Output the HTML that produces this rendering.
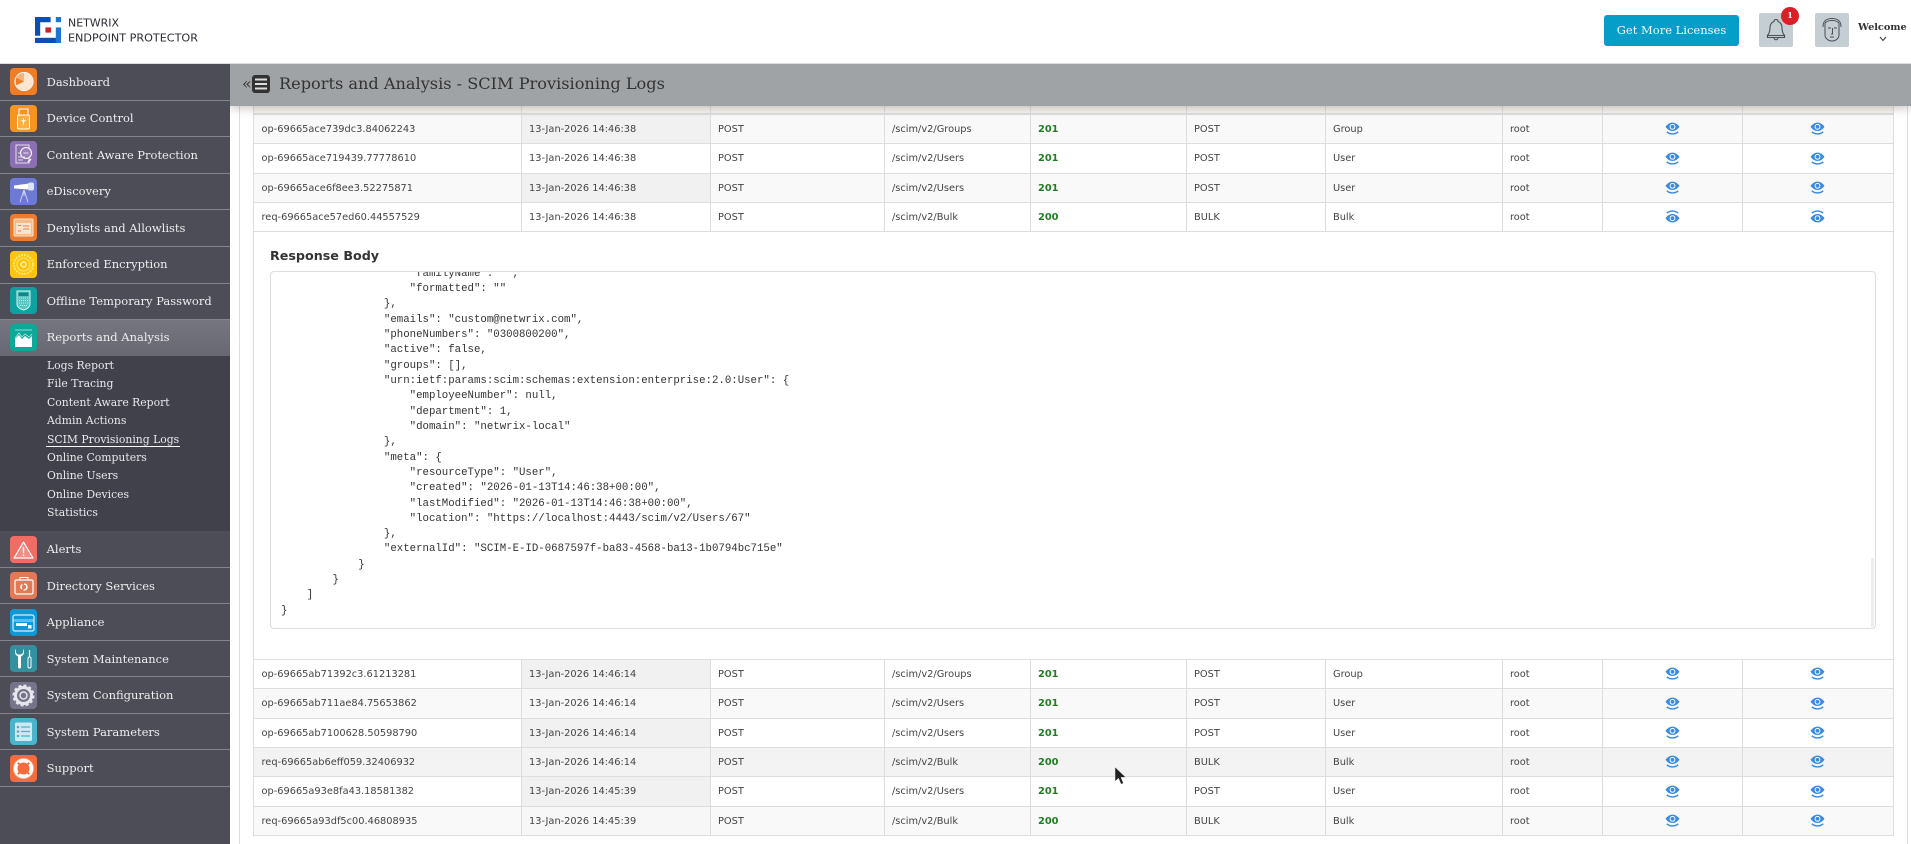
<!DOCTYPE html>
<html>
<head>
<meta charset="utf-8">
<title>Reports and Analysis - SCIM Provisioning Logs</title>
<style>
html,body{margin:0;padding:0;background:#fff;width:1911px;height:844px;overflow:hidden}
body{position:relative;font-family:"DejaVu Sans","Liberation Sans",sans-serif;color:#333}
.abs{position:absolute}
#top{position:absolute;left:0;top:0;width:1911px;height:63px;background:#fff;border-bottom:1px solid #ddd;z-index:5}
#side{position:absolute;left:0;top:64px;width:230px;height:780px;background:#4c4d57;z-index:4}
.i{position:absolute;left:0;width:230px;border-bottom:1px solid #85868d;box-sizing:border-box}
.t{position:absolute;left:46.6px;top:0;font-family:"DejaVu Serif","Liberation Serif",serif;font-size:11.5px;color:#eceef0;white-space:nowrap}
.ic{position:absolute;left:10px;width:27px;height:27px;z-index:6}
.s{position:absolute;left:47px;font-family:"DejaVu Serif","Liberation Serif",serif;font-size:10.8px;line-height:18px;color:#e8e9ec;white-space:nowrap;z-index:6}
#title{position:absolute;left:230px;top:64px;width:1681px;height:42px;background:#a0a3a6;box-shadow:0 2px 9px rgba(60,40,20,.28);z-index:3}
#title span{position:absolute;white-space:nowrap;font-family:"DejaVu Serif","Liberation Serif",serif;color:#333}
.vl{position:absolute;top:100px;bottom:0;width:1px;background:#ddd}
table{position:absolute;left:253px;width:1641px;border-collapse:separate;border-spacing:0;table-layout:fixed;font-size:9.8px;color:#444;background:#fff}
td{box-sizing:border-box;padding:0 0 0 7px;border-right:1px solid #ddd;border-bottom:1px solid #ddd;white-space:nowrap;overflow:hidden;vertical-align:middle}
td:first-child{border-left:1px solid #ddd;padding-left:7.5px}
tr.h td{border-bottom:2px solid #ddd;background:#f7f5f2;padding:0}
tr.a td{background:#f9f9f9}
tr.a td.k{background:#f1f1f1}
tr.b td.k{background:#f1f1f1}
tr.c td.k{background:#f7f7f7}
tr.c td{background:#f9f9f9}
tr.d td,tr.d td.k{background:#f3f3f3}
td b{color:#1f7f1f;font-weight:700;font-size:9.8px}
td.e{padding:0 1px 0 0;text-align:center}
td.e svg{display:block;margin:-1px auto 0;width:15px;height:13px}
#rb{position:absolute;left:253px;top:232px;width:1641px;height:427px;box-sizing:border-box;border-left:1px solid #ddd;border-right:1px solid #ddd;background:#fff}
#rbt{position:absolute;left:270px;top:247px;font-size:12.7px;line-height:17px;font-weight:700;color:#333;white-space:nowrap}
#pb{position:absolute;left:270px;top:271px;width:1606px;height:358px;box-sizing:border-box;border:1px solid #ddd;border-radius:4px;overflow:hidden;background:#fff}
#pb pre{position:absolute;left:10px;top:-5.2px;margin:0;font-family:"Liberation Mono",monospace;font-size:10.72px;line-height:15.31px;color:#333}
#sb{position:absolute;left:1871px;top:558px;width:3px;height:69px;background:#eee}
</style>
</head>
<body>
<svg width="0" height="0" style="position:absolute">
<symbol id="eb" viewBox="0 0 15 13"><path d="M.5 4.8C2.6 1.9 5 .6 7.5.6s4.9 1.3 7 4.2c-2.1 2.9-4.5 4.2-7 4.2S2.6 7.700.5 4.800z" fill="#3a8be0"/><circle cx="7.500" cy="4.800" r="2.900" fill="#fff"/><circle cx="7.500" cy="4.800" r="1.900" fill="#3a8be0"/><path d="M1.800 9.800C5 12.600 10 12.600 13.200 9.800" fill="none" stroke="#3a8be0" stroke-width="1.400"/></symbol>
<symbol id="et" viewBox="0 0 15 13"><path d="M.5 8.200C2.600 5.300 5 4 7.500 4s4.900 1.300 7 4.200c-2.100 2.900-4.500 4.200-7 4.200S2.600 11.100.5 8.200z" fill="#3a8be0"/><circle cx="7.500" cy="8.200" r="2.900" fill="#fff"/><circle cx="7.500" cy="8.200" r="1.900" fill="#3a8be0"/><path d="M1.800 3.200C5 .4 10 .4 13.200 3.200" fill="none" stroke="#3a8be0" stroke-width="1.400"/></symbol>
</svg>

<div id="top">
  <svg class="abs" style="left:35px;top:17px" width="26" height="26" viewBox="0 0 25 25">
    <path d="M0 0H15V5H5V18H0Z" fill="#0b4fb3"/>
    <rect x="20" y="0" width="5" height="5" fill="#1f75d0"/>
    <rect x="0" y="20" width="25" height="5" fill="#0b4fb3"/>
    <rect x="20" y="10" width="5" height="15" fill="#1f75d0"/>
    <rect x="10" y="10" width="5.500" height="5" fill="#d2232a"/>
  </svg>
  <svg class="abs" style="left:66px;top:14px" width="140" height="32">
    <text x="2" y="12.500" font-family="DejaVu Sans, sans-serif" font-size="10.500" fill="#2b2b33" textLength="51" lengthAdjust="spacingAndGlyphs">NETWRIX</text>
    <text x="2" y="27.500" font-family="DejaVu Sans, sans-serif" font-size="10.500" fill="#2b2b33" textLength="130" lengthAdjust="spacingAndGlyphs">ENDPOINT PROTECTOR</text>
  </svg>
  <div class="abs" style="left:1604px;top:15px;width:135px;height:31px;background:#059ec8;border-radius:3px;color:#f2fbff;font-family:'DejaVu Serif',serif;font-size:11.5px;line-height:31px;text-align:center">Get More Licenses</div>
  <div class="abs" style="left:1759px;top:13px;width:34px;height:34px;background:#c5ced3;border-radius:2px"></div>
  <svg class="abs" style="left:1765px;top:18px" width="22" height="24" viewBox="0 0 22 24" fill="none" stroke="#4a4f55" stroke-width="1.100">
    <path d="M11 1.500c-1.200 0-2 .8-2 2-3 1-4 3.500-4 6.500 0 4-1.300 6-2.500 7.500h17c-1.200-1.500-2.500-3.500-2.500-7.500 0-3-1-5.500-4-6.500 0-1.200-.8-2-2-2z"/><path d="M2.500 17.500v2h17v-2"/><path d="M9 19.500c0 3 4 3 4 0"/>
  </svg>
  <div class="abs" style="left:1781px;top:7px;width:18px;height:18px;border-radius:50%;background:#dc1f26;color:#fff;font-family:'DejaVu Serif',serif;font-weight:700;font-size:8px;line-height:17px;text-align:center">1</div>
  <div class="abs" style="left:1815px;top:13px;width:34px;height:34px;background:#c5ced3;border-radius:2px"></div>
  <svg class="abs" style="left:1820px;top:17px" width="24" height="26" viewBox="0 0 24 26" fill="none" stroke="#4a4f55" stroke-width="1">
    <path d="M3 10C3 3 7 1.500 12 1.500S21 3 21 10"/><path d="M5 10V6.500C6 4 9 3.500 12 3.500S18 4 19 6.500V10"/><path d="M5 8v10c0 3 3 6 7 6s7-3 7-6V8"/><path d="M8 11h3M14 11h3M12.500 11v6h-1.500M10 20h4"/>
  </svg>
  <div class="abs" style="left:1858px;top:20px;font-family:'DejaVu Serif',serif;font-weight:700;font-size:9.700px;line-height:15px;color:#333;white-space:nowrap">Welcome</div>
  <svg class="abs" style="left:1879px;top:36px" width="8" height="6"><path d="M1 1l3 3.500L7 1" fill="none" stroke="#333" stroke-width="1"/></svg>
</div>

<div id="side">
  <div class="i" style="top:0;height:37px"><span class="t" style="line-height:36px">Dashboard</span></div>
  <div class="i" style="top:37px;height:36px"><span class="t" style="line-height:35px">Device Control</span></div>
  <div class="i" style="top:73px;height:37px"><span class="t" style="line-height:36px">Content Aware Protection</span></div>
  <div class="i" style="top:110px;height:36px"><span class="t" style="line-height:35px">eDiscovery</span></div>
  <div class="i" style="top:146px;height:37px"><span class="t" style="line-height:36px">Denylists and Allowlists</span></div>
  <div class="i" style="top:183px;height:37px"><span class="t" style="line-height:35px">Enforced Encryption</span></div>
  <div class="i" style="top:220px;height:36px"><span class="t" style="line-height:35px">Offline Temporary Password</span></div>
  <div class="i" style="top:256px;height:36px;background:linear-gradient(#75767f,#676872);border:0"><span class="t" style="line-height:34px">Reports and Analysis</span></div>
  <div class="abs" style="left:0;top:292px;width:230px;height:175px;background:#40414b"></div>
  <div class="i" style="top:467px;height:37px"><span class="t" style="line-height:36px">Alerts</span></div>
  <div class="i" style="top:504px;height:36px"><span class="t" style="line-height:37px">Directory Services</span></div>
  <div class="i" style="top:540px;height:37px"><span class="t" style="line-height:36px">Appliance</span></div>
  <div class="i" style="top:577px;height:36px"><span class="t" style="line-height:37px">System Maintenance</span></div>
  <div class="i" style="top:613px;height:37px"><span class="t" style="line-height:36px">System Configuration</span></div>
  <div class="i" style="top:650px;height:36px"><span class="t" style="line-height:37px">System Parameters</span></div>
  <div class="i" style="top:686px;height:37px"><span class="t" style="line-height:36px">Support</span></div>
</div>

<div class="s" style="top:357px">Logs Report</div>
<div class="s" style="top:375px">File Tracing</div>
<div class="s" style="top:394px">Content Aware Report</div>
<div class="s" style="top:412px">Admin Actions</div>
<div class="s" style="top:431px">SCIM Provisioning Logs</div>
<div class="abs" style="left:46px;top:446px;width:134px;height:1px;background:#fff;z-index:6"></div>
<div class="s" style="top:449px">Online Computers</div>
<div class="s" style="top:467px">Online Users</div>
<div class="s" style="top:486px">Online Devices</div>
<div class="s" style="top:504px">Statistics</div>

<!-- sidebar icons -->
<svg class="ic" style="top:68px" viewBox="0 0 27 27"><rect width="27" height="27" rx="4" fill="#ee7d27"/><circle cx="14" cy="13.500" r="9" fill="none" stroke="#fff" stroke-width="1.200"/><path d="M14 13.500V4.500a9 9 0 0 1 0 18 9 9 0 0 1-8-5z" fill="#fde6d0"/><path d="M5 9l9 4.500V4.500z" fill="#f9b27a"/></svg>
<svg class="ic" style="top:105px" viewBox="0 0 27 27"><rect width="27" height="27" rx="4" fill="#f7941d"/><rect x="9" y="4" width="9" height="6" fill="none" stroke="#fff"/><rect x="7.500" y="10" width="12" height="14" rx="1.500" fill="#fbb040" stroke="#fff"/><path d="M13.500 13v7M11.500 15l2 2 2-2" stroke="#fff" fill="none"/></svg>
<svg class="ic" style="top:141px" viewBox="0 0 27 27"><rect width="27" height="27" rx="4" fill="#8b6fb0"/><rect x="6" y="4" width="13" height="18" fill="none" stroke="#e6def0"/><circle cx="16" cy="12" r="5.500" fill="#9a80bc" stroke="#fff"/><path d="M13.500 12h5M8 12h3M8 16h7M8 19h5" stroke="#e6def0"/><path d="M18 21l3-3" stroke="#fff" stroke-width="1.500"/></svg>
<svg class="ic" style="top:178px" viewBox="0 0 27 27"><rect width="27" height="27" rx="4" fill="#6e79d6"/><path d="M4 7.500l15-2v6l-15-1z" fill="#fff"/><rect x="18" y="4.500" width="6" height="8" rx="2" fill="#dfe3fa"/><path d="M14 12l-4 12M14 12l4 12M14 12v6" stroke="#dfe3fa" fill="none" stroke-width=".800"/></svg>
<svg class="ic" style="top:214px" viewBox="0 0 27 27"><rect width="27" height="27" rx="4" fill="#ef7c2e"/><rect x="4" y="5" width="19" height="17" rx="1" fill="#f7bb8a" stroke="#fde3cf"/><rect x="6" y="9" width="15" height="11" fill="#fbe4cf"/><path d="M8 11.500h3M13 12h6M13 15h6M8 17h3" stroke="#e8813b"/></svg>
<svg class="ic" style="top:251px" viewBox="0 0 27 27"><rect width="27" height="27" rx="4" fill="#fcc40f"/><circle cx="13.500" cy="13.500" r="9.500" fill="none" stroke="#fde77f" stroke-width="2" stroke-dasharray="2 1"/><circle cx="13.500" cy="13.500" r="6.500" fill="none" stroke="#fde77f"/><circle cx="13.500" cy="13.500" r="2.500" fill="none" stroke="#fff3a8" stroke-width="1.500"/></svg>
<svg class="ic" style="top:287px" viewBox="0 0 27 27"><rect width="27" height="27" rx="4" fill="#10a0a0"/><path d="M7 4h13v13c0 3-3 5-6.500 6C10 22 7 20 7 17z" fill="#5cc2bf" stroke="#d5f2f0"/><rect x="8.500" y="5.500" width="10" height="3.500" fill="#0c8888"/><path d="M9 11h9M9 13.500h9M9 16h9M10 18.500h7" stroke="#c8ecea" stroke-dasharray="1 1"/></svg>
<svg class="ic" style="top:324px" viewBox="0 0 27 27"><rect width="27" height="27" rx="4" fill="#0da898"/><path d="M5 6h17" stroke="#8fdcd3"/><path d="M5 23V15l4-4 3 4 3-3 4 3 3-3v11z" fill="#fff"/><path d="M5 14l4-5 3 4 3-3 4 3 3-3" fill="none" stroke="#bdeee8" stroke-width=".700"/></svg>
<svg class="ic" style="top:536px" viewBox="0 0 27 27"><rect width="27" height="27" rx="4" fill="#ef6d64"/><path d="M13.500 6L4 22h19z" fill="#f48c85" stroke="#fff" stroke-width="1.200" stroke-linejoin="round"/><path d="M13.500 11v6M13.500 18.500v1.500" stroke="#fff" stroke-width="1.400"/></svg>
<svg class="ic" style="top:572px" viewBox="0 0 27 27"><rect width="27" height="27" rx="4" fill="#e37a57"/><rect x="5" y="8" width="18" height="14" rx="1.500" fill="none" stroke="#fff" stroke-width="1.200"/><path d="M10 8V5.500h8V8" fill="none" stroke="#fff"/><circle cx="14" cy="15" r="3" fill="none" stroke="#fff" stroke-width="1.500" stroke-dasharray="5 2"/></svg>
<svg class="ic" style="top:609px" viewBox="0 0 27 27"><rect width="27" height="27" rx="4" fill="#0d99d9"/><rect x="3" y="6" width="21" height="16" rx="2" fill="none" stroke="#d6f0fb" stroke-width="1.200"/><rect x="3" y="10" width="21" height="3" fill="#d6f0fb" opacity=".4"/><rect x="6" y="14" width="11" height="3" fill="#fff"/><rect x="18" y="16" width="3.500" height="3.500" fill="#fff"/></svg>
<svg class="ic" style="top:645px" viewBox="0 0 27 27"><rect width="27" height="27" rx="4" fill="#33909f"/><path d="M6 4c-2 3-1 6 2 7.500V22c0 2 3 2 3 0V11.500c3-1.500 4-4.500 2-7.500v4l-2 1.500h-3L6 8z" fill="#fff"/><path d="M19.500 5v7" stroke="#fff" stroke-width="1.200"/><rect x="18" y="12" width="3" height="11" rx="1.400" fill="none" stroke="#fff"/></svg>
<svg class="ic" style="top:682px" viewBox="0 0 27 27"><rect width="27" height="27" rx="4" fill="#74748a"/><circle cx="13.500" cy="13.500" r="8" fill="none" stroke="#e6e6ec" stroke-width="3"/><circle cx="13.500" cy="13.500" r="10" fill="none" stroke="#e6e6ec" stroke-width="2" stroke-dasharray="3 2.200"/><circle cx="13.500" cy="13.500" r="3.500" fill="none" stroke="#e6e6ec" stroke-width="1.500"/></svg>
<svg class="ic" style="top:718px" viewBox="0 0 27 27"><rect width="27" height="27" rx="4" fill="#4bb3cc"/><rect x="5" y="4.500" width="17" height="18.500" rx="1.500" fill="#cdeaf2"/><path d="M11 9h9M11 13.500h9M11 18h9" stroke="#4bb3cc" stroke-width="1.300"/><circle cx="8" cy="9" r="1.300" fill="#4bb3cc"/><circle cx="8" cy="13.500" r="1.300" fill="#4bb3cc"/><circle cx="8" cy="18" r="1.300" fill="#4bb3cc"/></svg>
<svg class="ic" style="top:755px" viewBox="0 0 27 27"><rect width="27" height="27" rx="4" fill="#f36c3d"/><circle cx="13.500" cy="13.500" r="8" fill="none" stroke="#fff" stroke-width="4"/><circle cx="13.500" cy="13.500" r="10" fill="none" stroke="#f9c4ae" stroke-width=".800"/><path d="M7.800 7.800l3 3M19.200 7.800l-3 3M7.800 19.200l3-3M19.200 19.200l-3-3" stroke="#f36c3d" stroke-width="2"/></svg>

<div id="title">
  <span style="left:12px;top:10px;font-size:16px;line-height:20px">«</span>
  <svg class="abs" style="left:22px;top:11px" width="18" height="18"><rect width="18" height="18" rx="3" fill="#333"/><path d="M3 4.500h12M3 9h12M3 13.500h12" stroke="#ddd" stroke-width="2"/></svg>
  <span style="left:49px;top:8px;font-size:16.150px;line-height:24px">Reports and Analysis - SCIM Provisioning Logs</span>
</div>

<div class="vl" style="left:239px"></div>
<div class="vl" style="left:1907px"></div>

<table style="top:100px">
<colgroup><col style="width:269px"><col style="width:189px"><col style="width:174px"><col style="width:146px"><col style="width:156px"><col style="width:139px"><col style="width:177px"><col style="width:100px"><col style="width:140px"><col style="width:151px"></colgroup>
<tr class="h" style="height:15px"><td></td><td></td><td></td><td></td><td></td><td></td><td></td><td></td><td></td><td></td></tr>
<tr class="a" style="height:29px"><td>op-69665ace739dc3.84062243</td><td class="k">13-Jan-2026 14:46:38</td><td>POST</td><td>/scim/v2/Groups</td><td><b>201</b></td><td>POST</td><td>Group</td><td>root</td><td class="e"><svg><use href="#eb"/></svg></td><td class="e"><svg><use href="#eb"/></svg></td></tr>
<tr class="w" style="height:30px"><td>op-69665ace719439.77778610</td><td>13-Jan-2026 14:46:38</td><td>POST</td><td>/scim/v2/Users</td><td><b>201</b></td><td>POST</td><td>User</td><td>root</td><td class="e"><svg><use href="#eb"/></svg></td><td class="e"><svg><use href="#eb"/></svg></td></tr>
<tr class="a" style="height:29px"><td>op-69665ace6f8ee3.52275871</td><td class="k">13-Jan-2026 14:46:38</td><td>POST</td><td>/scim/v2/Users</td><td><b>201</b></td><td>POST</td><td>User</td><td>root</td><td class="e"><svg><use href="#eb"/></svg></td><td class="e"><svg><use href="#eb"/></svg></td></tr>
<tr class="w" style="height:29px"><td>req-69665ace57ed60.44557529</td><td>13-Jan-2026 14:46:38</td><td>POST</td><td>/scim/v2/Bulk</td><td><b>200</b></td><td>BULK</td><td>Bulk</td><td>root</td><td class="e"><svg><use href="#et"/></svg></td><td class="e"><svg><use href="#et"/></svg></td></tr>
</table>

<div id="rb"></div>
<div id="rbt">Response Body</div>
<div id="pb"><pre>                    "familyName": "",
                    "formatted": ""
                },
                "emails": "custom@netwrix.com",
                "phoneNumbers": "0300800200",
                "active": false,
                "groups": [],
                "urn:ietf:params:scim:schemas:extension:enterprise:2.0:User": {
                    "employeeNumber": null,
                    "department": 1,
                    "domain": "netwrix-local"
                },
                "meta": {
                    "resourceType": "User",
                    "created": "2026-01-13T14:46:38+00:00",
                    "lastModified": "2026-01-13T14:46:38+00:00",
                    "location": "https://localhost:4443/scim/v2/Users/67"
                },
                "externalId": "SCIM-E-ID-0687597f-ba83-4568-ba13-1b0794bc715e"
            }
        }
    ]
}</pre></div>
<div id="sb"></div>

<table style="top:659px;border-top:1px solid #ddd">
<colgroup><col style="width:269px"><col style="width:189px"><col style="width:174px"><col style="width:146px"><col style="width:156px"><col style="width:139px"><col style="width:177px"><col style="width:100px"><col style="width:140px"><col style="width:151px"></colgroup>
<tr class="b" style="height:29px"><td>op-69665ab71392c3.61213281</td><td class="k">13-Jan-2026 14:46:14</td><td>POST</td><td>/scim/v2/Groups</td><td><b>201</b></td><td>POST</td><td>Group</td><td>root</td><td class="e"><svg><use href="#eb"/></svg></td><td class="e"><svg><use href="#eb"/></svg></td></tr>
<tr class="c" style="height:30px"><td>op-69665ab711ae84.75653862</td><td class="k">13-Jan-2026 14:46:14</td><td>POST</td><td>/scim/v2/Users</td><td><b>201</b></td><td>POST</td><td>User</td><td>root</td><td class="e"><svg><use href="#eb"/></svg></td><td class="e"><svg><use href="#eb"/></svg></td></tr>
<tr class="b" style="height:29px"><td>op-69665ab7100628.50598790</td><td class="k">13-Jan-2026 14:46:14</td><td>POST</td><td>/scim/v2/Users</td><td><b>201</b></td><td>POST</td><td>User</td><td>root</td><td class="e"><svg><use href="#eb"/></svg></td><td class="e"><svg><use href="#eb"/></svg></td></tr>
<tr class="d" style="height:29px"><td>req-69665ab6eff059.32406932</td><td class="k">13-Jan-2026 14:46:14</td><td>POST</td><td>/scim/v2/Bulk</td><td><b>200</b></td><td>BULK</td><td>Bulk</td><td>root</td><td class="e"><svg><use href="#eb"/></svg></td><td class="e"><svg><use href="#eb"/></svg></td></tr>
<tr class="b" style="height:30px"><td>op-69665a93e8fa43.18581382</td><td class="k">13-Jan-2026 14:45:39</td><td>POST</td><td>/scim/v2/Users</td><td><b>201</b></td><td>POST</td><td>User</td><td>root</td><td class="e"><svg><use href="#eb"/></svg></td><td class="e"><svg><use href="#eb"/></svg></td></tr>
<tr class="c" style="height:29px"><td>req-69665a93df5c00.46808935</td><td class="k">13-Jan-2026 14:45:39</td><td>POST</td><td>/scim/v2/Bulk</td><td><b>200</b></td><td>BULK</td><td>Bulk</td><td>root</td><td class="e"><svg><use href="#eb"/></svg></td><td class="e"><svg><use href="#eb"/></svg></td></tr>
</table>

<svg class="abs" style="left:1114px;top:766px;z-index:9" width="13" height="20" viewBox="0 0 13 20"><path d="M1 1v14.500l3.500-3.300 2.500 6 2.500-1-2.500-5.800h4.800z" fill="#222" stroke="#eee" stroke-width=".500"/></svg>
</body>
</html>
